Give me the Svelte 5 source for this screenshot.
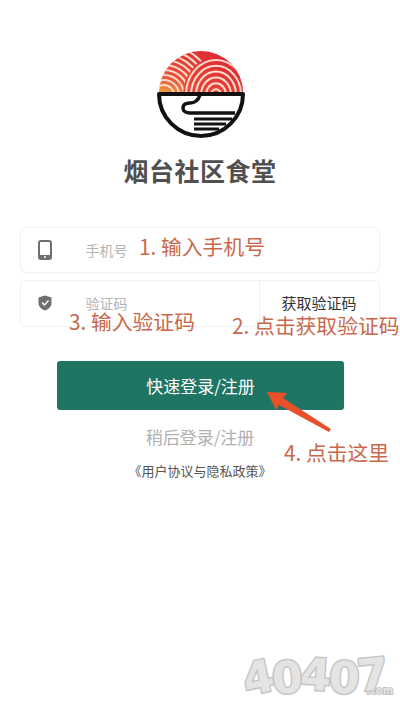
<script>
  const rightArcs = [5, 10, 15, 20, 25, 30];
  const leftArcs = [10, 15, 20, 25, 30, 35, 40, 45, 50];
</script>

<div class="page">
  <svg class="logo" viewBox="0 0 90 90" width="90" height="90" aria-hidden="true">
    <defs>
      <linearGradient id="sun" x1="0.1" y1="1" x2="0.6" y2="0">
        <stop offset="0" stop-color="#f2a23e" />
        <stop offset="0.3" stop-color="#e9583a" />
        <stop offset="1" stop-color="#dd2a33" />
      </linearGradient>
      <clipPath id="top"><path d="M3 42 A42 42 0 0 1 87 42 Z" /></clipPath>
    </defs>
    <g clip-path="url(#top)">
      <rect x="0" y="0" width="90" height="44" fill="url(#sun)" />
      <g fill="none" stroke="#ffdccb" stroke-width="2">
        {#each leftArcs as r}
          <circle cx="8" cy="44" {r} />
        {/each}
      </g>
      <ellipse cx="60" cy="44" rx="33" ry="38" fill="url(#sun)" />
      <g fill="none" stroke="#ffdccb" stroke-width="2">
        {#each rightArcs as r}
          <ellipse cx="60" cy="44" rx={r} ry={r * 1.17} />
        {/each}
      </g>
    </g>
    <path d="M3 43 H87 A42 42 0 0 1 3 43 Z" fill="#fff" stroke="#111" stroke-width="4" stroke-linejoin="round" />
    <path
      d="M44 44 C42 50 39 52 34 52 C29 52 27 54 27 57 C27 60 30 62 34 62 H79"
      fill="none"
      stroke="#111"
      stroke-width="3.5"
    />
    <path d="M38 68 H76 M38 73 H70 M38 78 H63" fill="none" stroke="#111" stroke-width="3" />
  </svg>

  <h1>烟台社区食堂</h1>

  <div class="field">
    <svg class="field-icon" viewBox="0 0 14 20" width="14" height="20" aria-hidden="true">
      <rect x="1" y="1" width="12" height="18" rx="2" fill="none" stroke="#6f6f6f" stroke-width="2" />
      <rect x="1" y="15" width="12" height="4" fill="#6f6f6f" />
      <circle cx="7" cy="17" r="1" fill="#fff" />
    </svg>
    <span class="placeholder">手机号</span>
  </div>

  <div class="field code">
    <svg class="field-icon shield" viewBox="0 0 14 16" width="14" height="16" aria-hidden="true">
      <path d="M7 0.5 L13.5 2.5 V8 C13.5 11.5 11 14 7 15.5 C3 14 0.5 11.5 0.5 8 V2.5 Z" fill="#6f6f6f" />
      <path d="M4 7.5 L6.5 10 L10.5 5.5" fill="none" stroke="#fff" stroke-width="1.4" />
    </svg>
    <span class="placeholder">验证码</span>
    <span class="get-code">获取验证码</span>
  </div>

  <button class="submit">快速登录/注册</button>
  <div class="later">稍后登录/注册</div>
  <div class="policy">《用户协议与隐私政策》</div>

  <span class="note n1">1. 输入手机号</span>
  <span class="note n2">2. 点击获取验证码</span>
  <span class="note n3">3. 输入验证码</span>
  <span class="note n4">4. 点击这里</span>

  <svg class="arrow" viewBox="0 0 70 45" width="70" height="45" aria-hidden="true">
    <path d="M2 1 L22 2 L18 7 L66 38 L64 41 L14 14 L11 19 Z" fill="#e8502a" />
  </svg>

  <div class="watermark">
    <span class="w1">4</span><span class="w2">0</span><span class="w3">4</span><span class="w4">0</span><span class="w5">7</span><span class="com">.com</span>
  </div>
</div>

<style>
  :global(body) {
    margin: 0;
    background: #fff;
  }

  .page {
    position: relative;
    width: 400px;
    height: 713px;
    overflow: hidden;
    box-sizing: border-box;
    padding-top: 51px;
    display: flex;
    flex-direction: column;
    align-items: center;
    font-family: "Noto Sans CJK SC", "Noto Sans", sans-serif;
  }

  .logo {
    display: block;
    margin-left: 1px;
  }

  h1 {
    margin: 11px 0 0;
    font-size: 25px;
    line-height: 36px;
    font-weight: 700;
    letter-spacing: 0.5px;
    color: #505050;
  }

  .field {
    width: 360px;
    height: 46px;
    margin-top: 7px;
    box-sizing: border-box;
    border: 1px solid #f0f0f0;
    border-radius: 6px;
    display: flex;
    align-items: center;
    margin-left: -1px;
  }

  h1 + .field {
    margin-top: 39px;
  }

  .field-icon {
    margin-left: 17px;
    flex: none;
  }

  .shield {
    margin-top: -2px;
  }

  .placeholder {
    margin-left: 34px;
    font-size: 14px;
    line-height: 14px;
    color: #b4b4b4;
  }

  .code {
    height: 47px;
  }

  .code .placeholder {
    margin-top: -2px;
  }

  .get-code {
    margin-left: auto;
    width: 120px;
    height: 100%;
    box-sizing: border-box;
    border-left: 1px solid #f0f0f0;
    display: flex;
    align-items: center;
    justify-content: center;
    font-size: 15px;
    line-height: 18px;
    color: #333;
    padding-bottom: 2px;
  }

  .submit {
    width: 287px;
    height: 49px;
    margin-top: 34px;
    margin-left: 1px;
    border: none;
    border-radius: 3px;
    background: #1f7563;
    color: #fff;
    font: 400 17px "Noto Sans CJK SC", sans-serif;
  }

  .later {
    margin-top: 15px;
    font-size: 17px;
    line-height: 24px;
    color: #b0b0b0;
  }

  .policy {
    margin-top: 13px;
    font-size: 13px;
    line-height: 18px;
    color: #555;
  }

  .note {
    position: absolute;
    font-size: 20.8px;
    line-height: 20px;
    color: #c8694c;
    white-space: nowrap;
  }

  .n1 { left: 139px; top: 236px; }
  .n2 { left: 232px; top: 315px; }
  .n3 { left: 69px; top: 311px; }
  .n4 { left: 284px; top: 442px; }

  .arrow {
    position: absolute;
    left: 265px;
    top: 391px;
  }

  .watermark {
    position: absolute;
    left: 243px;
    top: 656px;
    display: flex;
    align-items: flex-end;
    font-family: "DejaVu Sans", sans-serif;
    font-weight: 700;
    font-size: 44px;
    line-height: 44px;
    color: #e4e4e4;
    -webkit-text-stroke: 3px #c6c6c6;
    paint-order: stroke fill;
  }

  .watermark span {
    display: block;
  }

  .w1 { transform: rotate(-12deg); }
  .w2 { transform: rotate(-3deg); margin-left: -2px; }
  .w3 { transform: rotate(3deg) translateY(-3px); margin-left: -2px; }
  .w4 { transform: rotate(3deg); margin-left: -2px; }
  .w5 { transform: rotate(-6deg) translateY(-3px); margin-left: -2px; }

  .watermark .com {
    font-size: 10px;
    line-height: 12px;
    margin-left: -22px;
    margin-bottom: 3px;
    color: #e8e8e8;
    -webkit-text-stroke: 1.5px #b5b5b5;
  }
</style>
